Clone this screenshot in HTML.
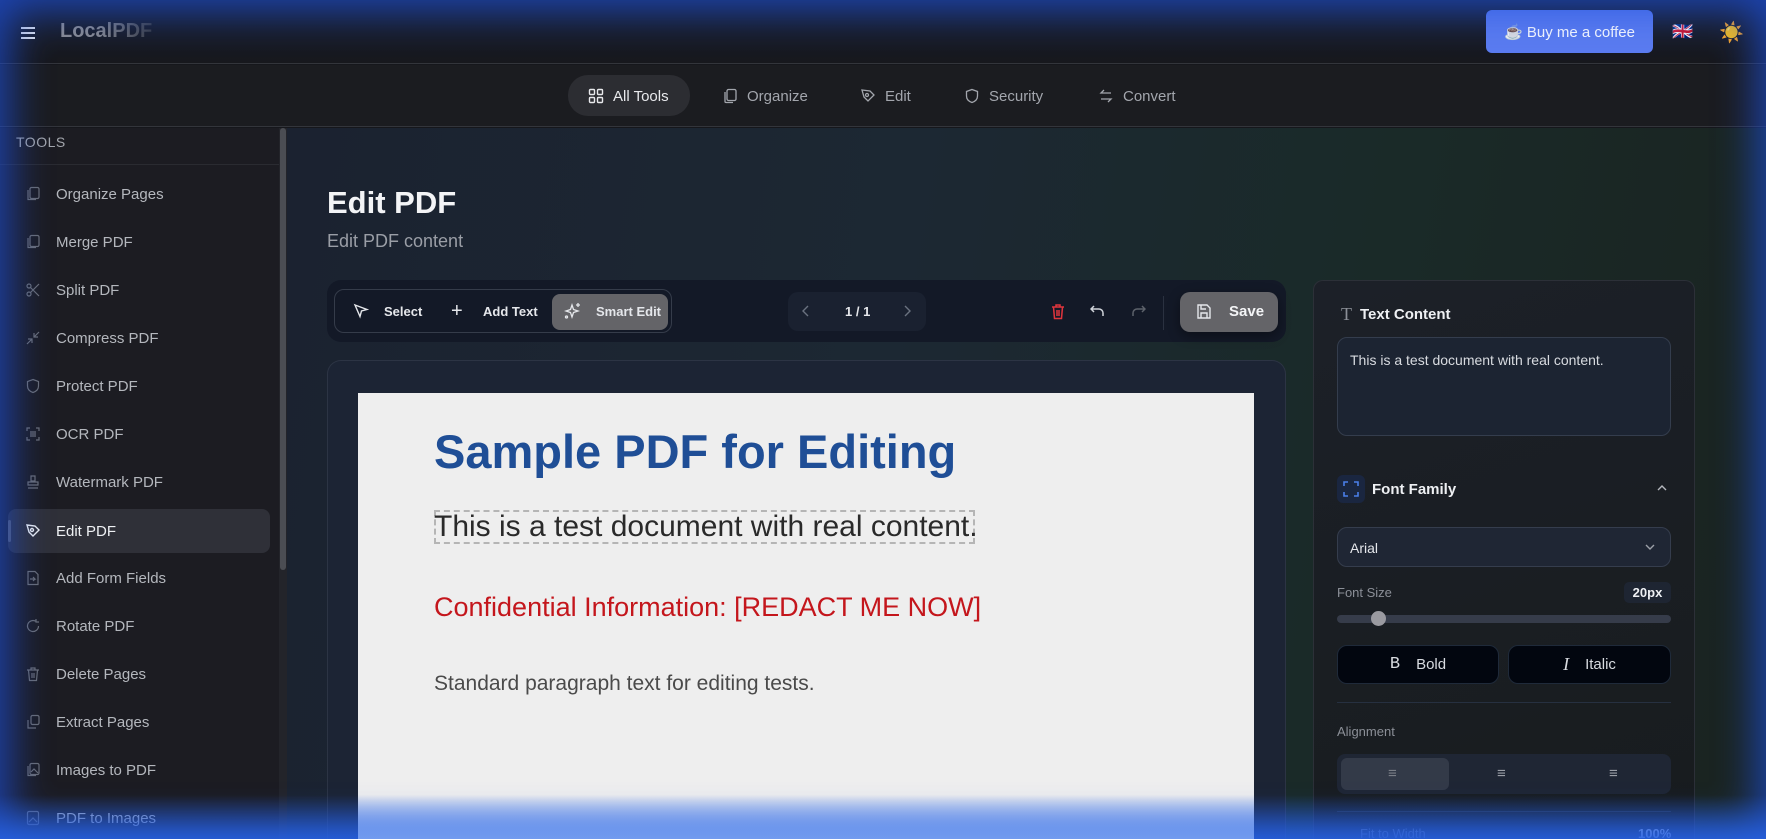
<!DOCTYPE html>
<html style="width:1766px;height:839px;overflow:hidden"><head><meta charset="utf-8"><style>
*{box-sizing:border-box;margin:0;padding:0}
body{width:1766px;height:839px;overflow:hidden;background:#16171c;font-family:"Liberation Sans",sans-serif;color:#e5e7eb;position:relative}
.wrap{position:absolute;left:0;top:0;width:1766px;height:839px;overflow:hidden}
.abs{position:absolute}
svg{display:block}
.hdr{left:0;top:0;width:1766px;height:64px;background:linear-gradient(#1a2030,#17181d);border-bottom:1px solid #33353b}
.nav{left:0;top:65px;width:1766px;height:62px;background:#1b1c20;border-bottom:1px solid #33353b}
.navi{top:0;height:62px;display:flex;align-items:center;gap:9px;font-size:15px;color:#a3a6ad}
.side{left:0;top:128px;width:279px;height:711px;background:#1c1c22}
.sb{left:279px;top:128px;width:8px;height:711px;background:#23242a}
.sbt{left:280px;top:128px;width:6px;height:442px;background:#4b4d53;border-radius:3px}
.item{left:8px;width:262px;height:44px;display:flex;align-items:center;font-size:15px;color:#b4b7bd;border-radius:8px}
.item svg{margin-left:17px;margin-right:15px}
.main{left:287px;top:128px;width:1479px;height:711px;background:linear-gradient(100deg,#1b2230 0%,#1c2833 40%,#1a2a28 70%,#1a2320 100%)}
.tb{left:327px;top:280px;width:959px;height:62px;background:#131927;border-radius:14px}
.card{left:327px;top:360px;width:959px;height:479px;background:#1c2434;border:1px solid #2c3444;border-bottom:none;border-radius:14px 14px 0 0}
.page{left:358px;top:393px;width:896px;height:446px;background:#eeeeee}
.rp{left:1313px;top:280px;width:382px;height:559px;background:linear-gradient(160deg,#1c2028,#181c1e);border:1px solid #2c3038;border-bottom:none;border-radius:10px 10px 0 0}
.lbl{font-size:13px;color:#8b8f97}
.btn2{height:39px;background:#02060f;border:1px solid #1f2a3a;border-radius:10px;display:flex;align-items:center;justify-content:center;gap:16px;font-size:15px;color:#d8dbe0}
</style></head><body><div class="wrap">
<div class="abs hdr"></div>
<svg class="abs" style="left:20px;top:26px" width="16" height="14" viewBox="0 0 16 14"><path d="M1 2h14M1 7h14M1 12h14" stroke="#e5e7eb" stroke-width="2"/></svg>
<div class="abs" style="left:60px;top:20px;font-size:20px;font-weight:bold;background:linear-gradient(90deg,#8a8b90 40%,#3a3c42);-webkit-background-clip:text;color:transparent">LocalPDF</div>
<div class="abs" style="left:1486px;top:10px;width:167px;height:43px;background:#5b7cf0;border-radius:6px;display:flex;align-items:center;justify-content:center;gap:8px;font-size:15px;color:#fff">☕ Buy me a coffee</div>
<div class="abs" style="left:1672px;top:22px;font-size:17px">🇬🇧</div>
<div class="abs" style="left:1719px;top:20px;font-size:20px">☀️</div>

<div class="abs nav">
 <div class="abs" style="left:568px;top:10px;width:122px;height:41px;background:#2c2d32;border-radius:20px"></div>
 <div class="abs navi" style="left:588px;color:#e8e9ec"><svg width="16" height="16" viewBox="0 0 16 16" fill="none" stroke="#e8e9ec" stroke-width="1.4"><rect x="1.5" y="1.5" width="5" height="5" rx="1"/><rect x="9.5" y="1.5" width="5" height="5" rx="1"/><rect x="1.5" y="9.5" width="5" height="5" rx="1"/><rect x="9.5" y="9.5" width="5" height="5" rx="1"/></svg>All Tools</div>
 <div class="abs navi" style="left:722px"><svg width="16" height="16" viewBox="0 0 16 16" fill="none" stroke="#a3a6ad" stroke-width="1.3"><rect x="5" y="1.5" width="9" height="11" rx="1.5"/><path d="M3 4v9.5a1 1 0 0 0 1 1h7"/></svg>Organize</div>
 <div class="abs navi" style="left:860px"><svg width="16" height="16" viewBox="0 0 16 16" fill="none" stroke="#a3a6ad" stroke-width="1.3"><path d="M2 2l8 1 4 4-6 6-4-4z"/><circle cx="7" cy="7" r="1.5"/></svg>Edit</div>
 <div class="abs navi" style="left:964px"><svg width="16" height="16" viewBox="0 0 16 16" fill="none" stroke="#a3a6ad" stroke-width="1.3"><path d="M8 1.5l5.5 2v4.5c0 3.5-2.5 5.5-5.5 6.5C5 13.5 2.5 11.5 2.5 8V3.5z"/></svg>Security</div>
 <div class="abs navi" style="left:1098px"><svg width="16" height="16" viewBox="0 0 16 16" fill="none" stroke="#a3a6ad" stroke-width="1.3"><path d="M13 5H3l3-3M3 11h10l-3 3"/></svg>Convert</div>
</div>

<div class="abs side"></div>
<div class="abs" style="left:16px;top:134px;font-size:14px;color:#a3a6ad;letter-spacing:.5px">TOOLS</div>
<div class="abs" style="left:0;top:164px;width:279px;height:1px;background:#2a2b31"></div>
<div class="abs item" style="top:172px"><svg width="16" height="16" viewBox="0 0 16 16" fill="none" stroke="#6b6e75" stroke-width="1.2"><rect x="5" y="1.5" width="9" height="11" rx="1.5"/><path d="M3 4v9.5h8"/></svg>Organize Pages</div>
<div class="abs item" style="top:220px"><svg width="16" height="16" viewBox="0 0 16 16" fill="none" stroke="#6b6e75" stroke-width="1.2"><rect x="5" y="1.5" width="9" height="11" rx="1.5"/><path d="M3 4v9.5h8"/></svg>Merge PDF</div>
<div class="abs item" style="top:268px"><svg width="16" height="16" viewBox="0 0 16 16" fill="none" stroke="#6b6e75" stroke-width="1.2"><circle cx="4" cy="4" r="2"/><circle cx="4" cy="12" r="2"/><path d="M5.5 5.5L14 14M5.5 10.5L14 2"/></svg>Split PDF</div>
<div class="abs item" style="top:316px"><svg width="16" height="16" viewBox="0 0 16 16" fill="none" stroke="#6b6e75" stroke-width="1.2"><path d="M14 2l-5 5M9 3v4h4M2 14l5-5M3 9h4v4"/></svg>Compress PDF</div>
<div class="abs item" style="top:364px"><svg width="16" height="16" viewBox="0 0 16 16" fill="none" stroke="#6b6e75" stroke-width="1.2"><path d="M8 1.5l5.5 2v4.5c0 3.5-2.5 5.5-5.5 6.5C5 13.5 2.5 11.5 2.5 8V3.5z"/></svg>Protect PDF</div>
<div class="abs item" style="top:412px"><svg width="16" height="16" viewBox="0 0 16 16" fill="none" stroke="#6b6e75" stroke-width="1.2"><path d="M2 5V2h3M11 2h3v3M14 11v3h-3M5 14H2v-3M5 6h6M5 8h6M5 10h6"/></svg>OCR PDF</div>
<div class="abs item" style="top:460px"><svg width="16" height="16" viewBox="0 0 16 16" fill="none" stroke="#6b6e75" stroke-width="1.2"><path d="M6 2h4v5H6zM3 8h10v3H3zM3 14h10"/></svg>Watermark PDF</div>
<div class="abs item" style="top:509px;background:#2f3038;color:#eef0f3"><svg width="16" height="16" viewBox="0 0 16 16" fill="none" stroke="#eef0f3" stroke-width="1.4"><path d="M2 2l8 1 4 4-6 6-4-4z"/><circle cx="7" cy="7" r="1.5"/></svg>Edit PDF</div>
<div class="abs" style="left:8px;top:520px;width:3px;height:22px;background:#5a5c64;border-radius:2px"></div>
<div class="abs item" style="top:556px"><svg width="16" height="16" viewBox="0 0 16 16" fill="none" stroke="#6b6e75" stroke-width="1.2"><path d="M3 1.5h7l3 3v10H3zM5 9h5l-2-2M10 9l-2 2"/></svg>Add Form Fields</div>
<div class="abs item" style="top:604px"><svg width="16" height="16" viewBox="0 0 16 16" fill="none" stroke="#6b6e75" stroke-width="1.2"><path d="M13.5 8A5.5 5.5 0 1 1 11 3.4M11 1v3h3"/></svg>Rotate PDF</div>
<div class="abs item" style="top:652px"><svg width="16" height="16" viewBox="0 0 16 16" fill="none" stroke="#6b6e75" stroke-width="1.2"><path d="M2 4h12M6 4V2h4v2M3.5 4l1 10.5h7l1-10.5M7 7v5M9 7v5"/></svg>Delete Pages</div>
<div class="abs item" style="top:700px"><svg width="16" height="16" viewBox="0 0 16 16" fill="none" stroke="#6b6e75" stroke-width="1.2"><rect x="6" y="1.5" width="8" height="9" rx="1.5"/><path d="M3 6v8h8"/></svg>Extract Pages</div>
<div class="abs item" style="top:748px"><svg width="16" height="16" viewBox="0 0 16 16" fill="none" stroke="#6b6e75" stroke-width="1.2"><rect x="5" y="1.5" width="9" height="11" rx="1.5"/><path d="M3 4v9.5h8M6 10l3-3 4 4"/></svg>Images to PDF</div>
<div class="abs item" style="top:796px"><svg width="16" height="16" viewBox="0 0 16 16" fill="none" stroke="#6b6e75" stroke-width="1.2"><rect x="2.5" y="1.5" width="11" height="13" rx="1.5"/><path d="M4 12l4-4 4 4M5.5 5h.1"/></svg>PDF to Images</div>
<div class="abs sb"></div><div class="abs sbt"></div>

<div class="abs main"></div>
<div class="abs" style="left:327px;top:185px;font-size:31px;font-weight:bold;color:#f3f4f6">Edit PDF</div>
<div class="abs" style="left:327px;top:231px;font-size:18px;color:#9a9ea6">Edit PDF content</div>

<div class="abs tb"></div>
<div class="abs" style="left:334px;top:289px;width:338px;height:44px;border:1px solid #353c4a;border-radius:10px"></div>
<div class="abs" style="left:552px;top:294px;width:116px;height:36px;background:#646468;border-radius:8px"></div>
<svg class="abs" style="left:353px;top:303px" width="16" height="16" viewBox="0 0 16 16" fill="none" stroke="#e5e7eb" stroke-width="1.4"><path d="M2 2l12 4.5-5.5 1.5-1.5 5.5z"/></svg>
<div class="abs" style="left:384px;top:304px;font-size:13px;font-weight:bold;color:#e5e7eb">Select</div>
<div class="abs" style="left:451px;top:301px;font-size:20px;color:#e5e7eb;line-height:20px">+</div>
<div class="abs" style="left:483px;top:304px;font-size:13px;font-weight:bold;color:#e5e7eb">Add Text</div>
<svg class="abs" style="left:564px;top:302px" width="18" height="18" viewBox="0 0 18 18" fill="none" stroke="#e5e7eb" stroke-width="1.3"><path d="M8 3l1.5 4.5L14 9l-4.5 1.5L8 15l-1.5-4.5L2 9l4.5-1.5zM14 1v4M12 3h4"/><circle cx="2.5" cy="15" r="1"/></svg>
<div class="abs" style="left:596px;top:304px;font-size:13px;font-weight:bold;color:#e5e7eb">Smart Edit</div>
<div class="abs" style="left:788px;top:292px;width:138px;height:39px;background:#1a2130;border-radius:10px"></div>
<svg class="abs" style="left:802px;top:305px" width="8" height="12" viewBox="0 0 8 12" fill="none" stroke="#6b7280" stroke-width="1.4"><path d="M6 1L1 6l5 5"/></svg>
<div class="abs" style="left:845px;top:304px;font-size:13px;font-weight:bold;color:#e5e7eb">1 / 1</div>
<svg class="abs" style="left:903px;top:305px" width="8" height="12" viewBox="0 0 8 12" fill="none" stroke="#6b7280" stroke-width="1.4"><path d="M2 1l5 5-5 5"/></svg>
<svg class="abs" style="left:1050px;top:303px" width="16" height="17" viewBox="0 0 16 17" fill="none" stroke="#e0353d" stroke-width="1.5"><path d="M2 4h12M6 4V2h4v2M3.5 4l1 11.5h7l1-11.5M7 7v6M9 7v6"/></svg>
<svg class="abs" style="left:1090px;top:304px" width="15" height="14" viewBox="0 0 15 14" fill="none" stroke="#d1d5db" stroke-width="1.5"><path d="M4 2L1 5l3 3M1 5h8a4 4 0 0 1 4 4v3"/></svg>
<svg class="abs" style="left:1131px;top:304px" width="15" height="14" viewBox="0 0 15 14" fill="none" stroke="#5d626b" stroke-width="1.5"><path d="M11 2l3 3-3 3M14 5H6a4 4 0 0 0-4 4v3"/></svg>
<div class="abs" style="left:1163px;top:296px;width:1px;height:34px;background:#2a3140"></div>
<div class="abs" style="left:1180px;top:292px;width:98px;height:40px;background:#646468;border-radius:10px;box-shadow:0 4px 12px rgba(0,0,0,.4)"></div>
<svg class="abs" style="left:1196px;top:303px" width="16" height="17" viewBox="0 0 16 17" fill="none" stroke="#e5e7eb" stroke-width="1.4"><path d="M2 2h9l3 3v10H2zM5 2v4h5M5 15v-5h6v5"/></svg>
<div class="abs" style="left:1229px;top:303px;font-size:15px;font-weight:bold;color:#f3f4f6">Save</div>

<div class="abs card"></div>
<div class="abs page"></div>
<div class="abs" style="left:434px;top:424px;font-size:47px;font-weight:bold;color:#1f4e96;white-space:nowrap">Sample PDF for Editing</div>
<div class="abs" style="left:434px;top:510px;width:541px;height:34px;border:2px dashed #b5b5b5"></div>
<div class="abs" style="left:434px;top:510px;font-size:30px;color:#2a2a2a;white-space:nowrap">This is a test document with real content.</div>
<div class="abs" style="left:434px;top:592px;font-size:27px;color:#c4161c;white-space:nowrap">Confidential Information: [REDACT ME NOW]</div>
<div class="abs" style="left:434px;top:672px;font-size:21px;color:#4a4a4a;white-space:nowrap">Standard paragraph text for editing tests.</div>

<div class="abs rp"></div>
<div class="abs" style="left:1341px;top:304px;font-size:18px;color:#8b8f97;font-family:'Liberation Serif',serif">T</div>
<div class="abs" style="left:1360px;top:306px;font-size:15px;font-weight:bold;color:#eef0f3">Text Content</div>
<div class="abs" style="left:1337px;top:337px;width:334px;height:99px;background:#1c2432;border:1px solid #343d4d;border-radius:10px;padding:14px 12px;font-size:14px;color:#d8dbe0">This is a test document with real content.</div>
<div class="abs" style="left:1337px;top:475px;width:28px;height:28px;background:#1a2640;border-radius:6px"></div>
<svg class="abs" style="left:1343px;top:481px" width="16" height="16" viewBox="0 0 16 16" fill="none" stroke="#4a7ee8" stroke-width="1.6"><path d="M1 5V1h4M11 1h4v4M15 11v4h-4M5 15H1v-4"/></svg>
<div class="abs" style="left:1372px;top:481px;font-size:15px;font-weight:bold;color:#eef0f3">Font Family</div>
<svg class="abs" style="left:1656px;top:484px" width="12" height="8" viewBox="0 0 12 8" fill="none" stroke="#b5b8be" stroke-width="1.4"><path d="M2 6l4-4 4 4"/></svg>
<div class="abs" style="left:1337px;top:527px;width:334px;height:40px;background:#1f2634;border:1px solid #353d4d;border-radius:10px;padding:12px 12px;font-size:14px;color:#e5e7eb">Arial</div>
<svg class="abs" style="left:1644px;top:543px" width="12" height="8" viewBox="0 0 12 8" fill="none" stroke="#9ca0a8" stroke-width="1.4"><path d="M2 2l4 4 4-4"/></svg>
<div class="abs lbl" style="left:1337px;top:585px">Font Size</div>
<div class="abs" style="left:1624px;top:582px;width:47px;height:21px;background:#1e2532;border-radius:5px;font-size:13px;font-weight:bold;color:#eef0f3;text-align:center;line-height:21px">20px</div>
<div class="abs" style="left:1337px;top:615px;width:334px;height:8px;background:#363c4a;border-radius:4px"></div>
<div class="abs" style="left:1371px;top:611px;width:15px;height:15px;background:#9a9aa0;border-radius:50%"></div>
<div class="abs btn2" style="left:1337px;top:645px;width:162px"><span style="font-family:'Liberation Mono',monospace;font-size:17px">B</span>Bold</div>
<div class="abs btn2" style="left:1508px;top:645px;width:163px"><span style="font-family:'Liberation Serif',serif;font-style:italic;font-size:18px">I</span>Italic</div>
<div class="abs" style="left:1337px;top:702px;width:334px;height:1px;background:#263040"></div>
<div class="abs lbl" style="left:1337px;top:724px">Alignment</div>
<div class="abs" style="left:1337px;top:754px;width:334px;height:40px;background:#1f2634;border-radius:8px"></div>
<div class="abs" style="left:1341px;top:758px;width:108px;height:32px;background:#333a48;border-radius:6px"></div>
<div class="abs" style="left:1388px;top:765px;font-size:15px;color:#7a7e86">≡</div>
<div class="abs" style="left:1497px;top:765px;font-size:15px;color:#9a9ea6">≡</div>
<div class="abs" style="left:1609px;top:765px;font-size:15px;color:#9a9ea6">≡</div>
<div class="abs" style="left:1337px;top:811px;width:334px;height:1px;background:#263040"></div>
<div class="abs" style="left:1360px;top:826px;font-size:13px;color:#6b7280">Fit to Width</div>
<div class="abs" style="left:1638px;top:826px;font-size:13px;font-weight:bold;color:#d8dbe0">100%</div>

<div class="abs" style="left:0;top:0;width:1766px;height:839px;pointer-events:none;box-shadow:inset 0 0 40px 10px rgba(30,80,220,.75)"></div>
<div class="abs" style="left:0;top:795px;width:1766px;height:44px;pointer-events:none;background:linear-gradient(rgba(30,80,220,0),rgba(40,100,230,.8))"></div>
<div class="abs" style="left:358px;top:795px;width:896px;height:44px;pointer-events:none;background:linear-gradient(rgba(160,190,240,0),rgba(120,160,240,.9))"></div>
</div></body></html>
